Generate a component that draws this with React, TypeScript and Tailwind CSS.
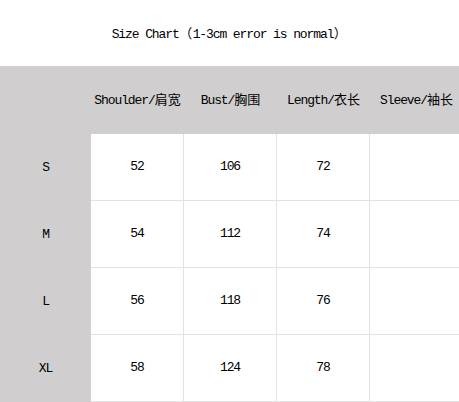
import React from 'react'

const cjk = "font-['Noto_Sans_CJK_SC',sans-serif] text-[13px] tracking-normal"
const paren = "inline-block w-[14px] text-center font-['Noto_Sans_CJK_SC',sans-serif] text-[13px] tracking-normal"

const columns = [
  { en: 'Shoulder/', zh: '肩宽' },
  { en: 'Bust/', zh: '胸围' },
  { en: 'Length/', zh: '衣长' },
  { en: 'Sleeve/', zh: '袖长' },
]

const rows = [
  { size: 'S', values: ['52', '106', '72', ''] },
  { size: 'M', values: ['54', '112', '74', ''] },
  { size: 'L', values: ['56', '118', '76', ''] },
  { size: 'XL', values: ['58', '124', '78', ''] },
]

export default function App() {
  return (
    <div className="w-[459px] h-[402px] overflow-hidden bg-white text-black font-['Liberation_Mono',monospace] text-[13px] tracking-[-1.1px]">
      {/* Title */}
      <div className="h-[66px] flex items-center justify-center pt-[2px]">
        <span>
          Size Chart<span className={paren}>（</span>1-3cm error is normal<span className={paren}>）</span>
        </span>
      </div>

      {/* Header */}
      <div className="flex h-[68px] w-[560px] bg-[#d0cecf] items-center">
        <div className="w-[91px] shrink-0" />
        {columns.map((col) => (
          <div key={col.en} className="w-[93px] shrink-0 text-center whitespace-nowrap">
            {col.en}
            <span className={cjk}>{col.zh}</span>
          </div>
        ))}
      </div>

      {/* Body */}
      {rows.map((row) => (
        <div key={row.size} className="flex h-[67px] w-[560px]">
          <div className="w-[91px] shrink-0 bg-[#d0cecf] flex items-center justify-center">
            {row.size}
          </div>
          {row.values.map((v, idx) => (
            <div
              key={idx}
              className="w-[93px] shrink-0 border-r border-b border-[#e3e3e3] flex items-center justify-center"
            >
              {v}
            </div>
          ))}
        </div>
      ))}
    </div>
  )
}
